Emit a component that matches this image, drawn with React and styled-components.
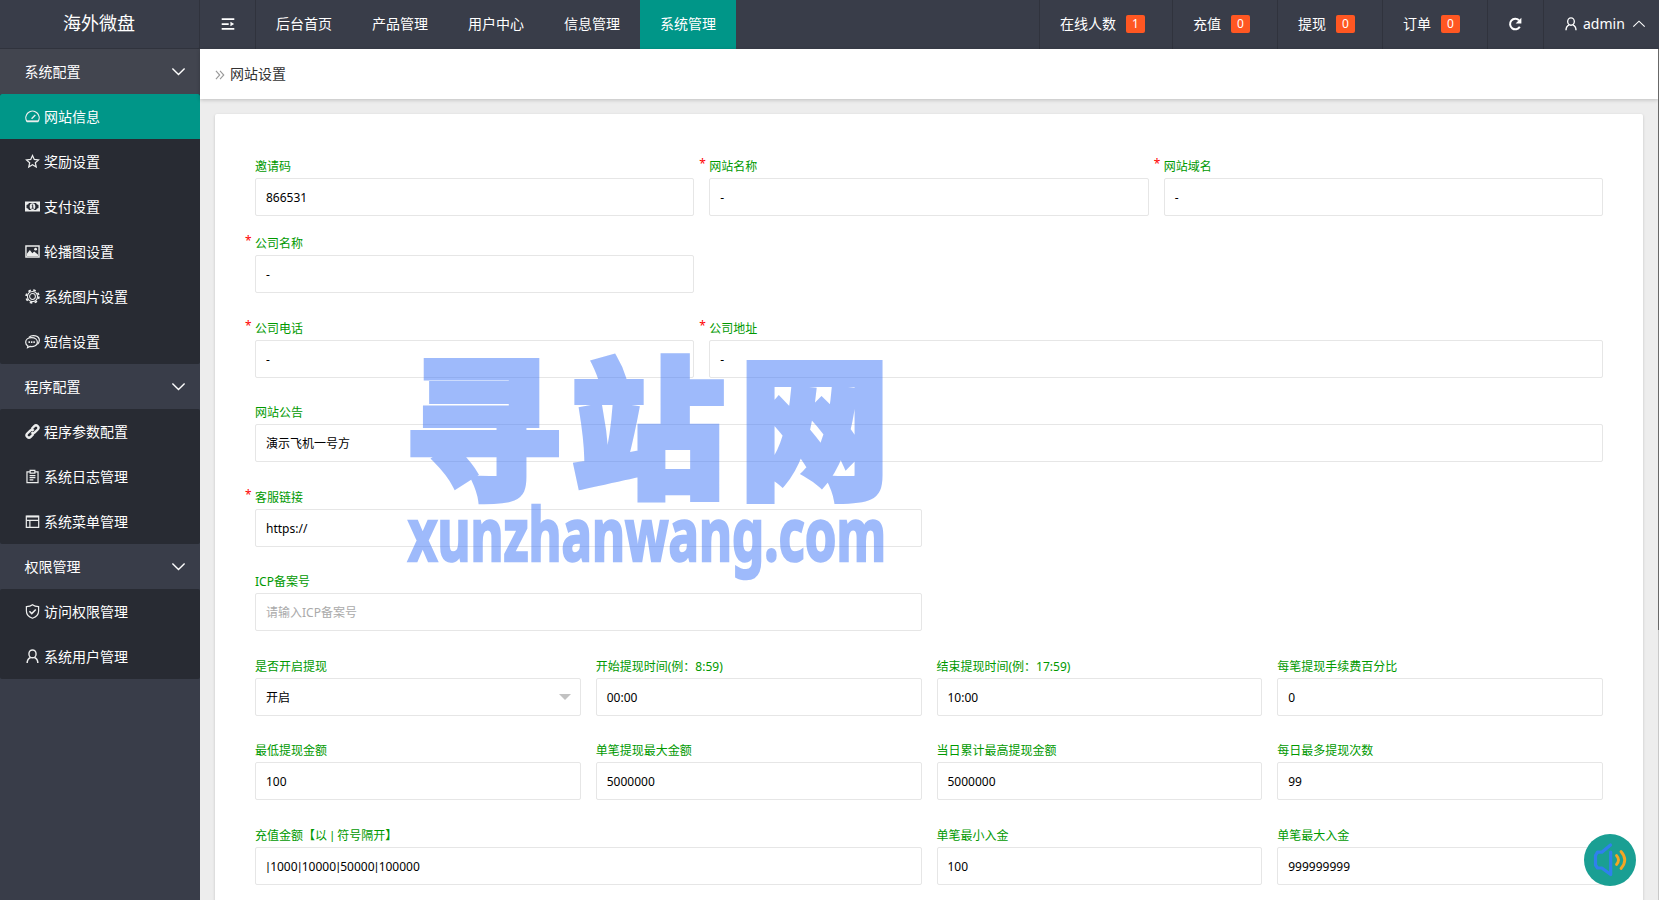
import React from "react";
import styled, { createGlobalStyle, css } from "styled-components";

const GlobalStyle = createGlobalStyle`
  * {
    box-sizing: border-box;
  }

  body {
    margin: 0;
    overflow: hidden;
    background: #ededed;
    font-family: "Noto Sans", "Noto Sans CJK SC", sans-serif;
    font-size: 14px;
  }
`;

const icons = {
  dashboard: (
    <>
      <path d="M2.1 13.300A7.100 7.100 0 1 1 13.900 13.300Z" />
      <path d="M7 10.400 11 6.400" strokeWidth="1.600" />
      <path d="M1.900 13.200h12.200" strokeWidth="2" />
    </>
  ),
  star: <path d="M8 1.600 9.900 5.800l4.500.5-3.400 3 1 4.600L8 11.500l-4 2.400 1-4.600-3.400-3 4.500-.5Z" />,
  money: (
    <>
      <path d="M0 2.700h16v10.600H0Z" fill="currentColor" stroke="none" />
      <path d="M4.200 4.200h7.600Q12 6 14.400 6.300v3.400Q12 10 11.800 11.800H4.200Q4 10 1.600 9.700V6.300Q4 6 4.200 4.200Z" fill="#282b33" stroke="none" />
      <ellipse cx="8" cy="8" rx="3" ry="3.600" fill="currentColor" stroke="none" />
      <path d="M7.200 6.900 8.200 6.200v3.600M7 9.900h2.300" stroke="#282b33" strokeWidth="1" />
    </>
  ),
  picture: (
    <>
      <path d="M1 2.200h14v11.600H1Z" strokeWidth="1.500" />
      <path d="M2 12.800V10.500l3.200-4 2.600 3.300 2-1.700 4.200 3.400v1.300Z" fill="currentColor" stroke="none" />
      <circle cx="11.300" cy="5.500" r="1.500" fill="currentColor" stroke="none" />
    </>
  ),
  gear: (
    <>
      <circle cx="8" cy="8" r="6.800" strokeWidth="1.800" strokeDasharray="2.700 2.640" />
      <circle cx="8" cy="8" r="5.400" strokeWidth="1.200" />
      <circle cx="8" cy="8" r="3.100" strokeWidth="1.100" />
    </>
  ),
  chat: (
    <>
      <path d="M4.300 3.400C8 0 15.600 2 15.300 7c-.1 1.900-.8 3-2 4" />
      <path d="M7 3.900C3.200 3.900.7 6 .7 8.700c0 1.700.9 3.100 2.400 4L2.700 14.500l2.600-1.200c4.300.8 7.900-1.300 7.900-4.600C13.200 6 10.700 3.900 7 3.900Z" />
      <path d="M3.700 8.700h1.600M6.300 8.700h1.600M8.900 8.700h1.600" strokeWidth="1.800" />
    </>
  ),
  link: (
    <g strokeWidth="2.500">
      <path d="M6.900 5.300 9.900 2.300a2.500 2.500 0 0 1 3.700 3.600l-3.200 3.100a2.500 2.500 0 0 1-3.600-.2" />
      <path d="m9.100 10.700-3 3a2.500 2.500 0 0 1-3.700-3.600l3.200-3.100a2.500 2.500 0 0 1 3.600.2" />
    </g>
  ),
  log: (
    <>
      <path d="M5.300 3H2.100v11.500h11.800V3h-3.200" />
      <path d="M5.500 1.400h5v3.100h-5Z" />
      <path d="M4.900 7h6.200M4.900 9.300h6.200M4.900 11.600h4" />
    </>
  ),
  menu: (
    <>
      <path d="M1.400 2.300h13.200v12H1.400Z" />
      <path d="M1.400 2.800h13.200" strokeWidth="1.700" />
      <path d="M1.400 6.800h13.200M5.200 6.800v7.200" />
    </>
  ),
  shield: (
    <>
      <path d="M8 .9C6.300 2.300 3.800 2.900 1.500 2.900v4.600C1.500 11.100 4.300 13.900 8 15.200c3.700-1.300 6.500-4.100 6.500-7.700V2.900C12.200 2.900 9.700 2.300 8 .9Z" />
      <path d="m4.700 7.700 2.500 2.500 4.300-4.400" strokeWidth="1.700" />
    </>
  ),
  user: (
    <>
      <ellipse cx="8" cy="5.200" rx="3.800" ry="4.200" strokeWidth="1.500" />
      <path d="M5.900 9C3.500 10 2.300 11.900 2.300 15M10.100 9c2.400 1 3.600 2.900 3.600 6" strokeWidth="1.600" />
    </>
  ),
  shrink: (
    <>
      <path d="M.8 2.400h14.400M.8 8h8M.8 13.600h14.400" strokeWidth="2" />
      <path d="M10.800 5.300v5.400L15 8Z" fill="currentColor" stroke="none" />
    </>
  ),
  refresh: (
    <>
      <path d="M13.500 11.200A6 6 0 1 1 12.600 3.800" strokeWidth="2.300" />
      <path d="M15.300.8v6.600H8.700Z" fill="currentColor" stroke="none" />
    </>
  ),
  down: <path d="m1.500 4.800 6.500 6.300 6.500-6.300" strokeWidth="1.500" />,
  up: <path d="M1.500 11.100 8 4.800l6.500 6.300" strokeWidth="1.300" />,
  crumb: <path d="m1.500 1.500 6 6.500-6 6.500M8 1.500l6 6.500L8 14.500" strokeWidth="1.800" />,
};

const Icon = ({ name, size = 16 }) => (
  <IconSvg viewBox="0 0 16 16" $size={size}>
    {icons[name]}
  </IconSvg>
);

const navItems = ["后台首页", "产品管理", "用户中心", "信息管理", "系统管理"];

const counters = [
  { label: "在线人数", count: 1 },
  { label: "充值", count: 0 },
  { label: "提现", count: 0 },
  { label: "订单", count: 0 },
];

const menu = [
  {
    label: "系统配置",
    hover: true,
    items: [
      { label: "网站信息", icon: "dashboard", active: true },
      { label: "奖励设置", icon: "star" },
      { label: "支付设置", icon: "money" },
      { label: "轮播图设置", icon: "picture" },
      { label: "系统图片设置", icon: "gear" },
      { label: "短信设置", icon: "chat" },
    ],
  },
  {
    label: "程序配置",
    items: [
      { label: "程序参数配置", icon: "link" },
      { label: "系统日志管理", icon: "log" },
      { label: "系统菜单管理", icon: "menu" },
    ],
  },
  {
    label: "权限管理",
    items: [
      { label: "访问权限管理", icon: "shield" },
      { label: "系统用户管理", icon: "user" },
    ],
  },
];

const rows = [
  {
    height: 77,
    fields: [
      { label: "邀请码", value: "866531", span: 4 },
      { label: "网站名称", value: "-", span: 4, required: true },
      { label: "网站域名", value: "-", span: 4, required: true },
    ],
  },
  { height: 85, fields: [{ label: "公司名称", value: "-", span: 4, required: true }] },
  {
    height: 84,
    fields: [
      { label: "公司电话", value: "-", span: 4, required: true },
      { label: "公司地址", value: "-", span: 8, required: true },
    ],
  },
  { height: 85, fields: [{ label: "网站公告", value: "演示飞机一号方", span: 12 }] },
  { height: 84, fields: [{ label: "客服链接", value: "https://", span: 6, required: true }] },
  { height: 85, fields: [{ label: "ICP备案号", placeholder: "请输入ICP备案号", span: 6 }] },
  {
    height: 84,
    fields: [
      { label: "是否开启提现", value: "开启", span: 3, select: true },
      { label: "开始提现时间(例：8:59)", value: "00:00", span: 3 },
      { label: "结束提现时间(例：17:59)", value: "10:00", span: 3 },
      { label: "每笔提现手续费百分比", value: "0", span: 3 },
    ],
  },
  {
    height: 85,
    fields: [
      { label: "最低提现金额", value: "100", span: 3 },
      { label: "单笔提现最大金额", value: "5000000", span: 3 },
      { label: "当日累计最高提现金额", value: "5000000", span: 3 },
      { label: "每日最多提现次数", value: "99", span: 3 },
    ],
  },
  {
    height: 85,
    fields: [
      { label: "充值金额【以 | 符号隔开】", value: "|1000|10000|50000|100000", span: 6 },
      { label: "单笔最小入金", value: "100", span: 3 },
      { label: "单笔最大入金", value: "999999999", span: 3 },
    ],
  },
];

// The separator is set in a face with a narrow bar
const withPipes = (text) =>
  text.split("|").map((part, i) => (
    <React.Fragment key={i}>
      {i > 0 && <Pipe>|</Pipe>}
      {part}
    </React.Fragment>
  ));

const Field = ({ label, value, placeholder, span, required, select }) => (
  <FieldWrap $span={span}>
    <Label>
      {required && <Star>*</Star>}
      {withPipes(label)}
    </Label>
    <InputBox $empty={!value}>
      {withPipes(value || placeholder)}
      {select && <Caret />}
    </InputBox>
  </FieldWrap>
);

const App = () => {
  return (
    <Page>
      <GlobalStyle />
      <Header>
        <Logo>海外微盘</Logo>
        <Toggle>
          <Icon name="shrink" size={14} />
        </Toggle>
        {navItems.map((item) => (
          <NavItem key={item} $active={item === "系统管理"}>
            {item}
          </NavItem>
        ))}
        <Spacer />
        {counters.map(({ label, count }) => (
          <Counter key={label}>
            {label}
            <Badge>{count}</Badge>
          </Counter>
        ))}
        <Refresh>
          <Icon name="refresh" size={14} />
        </Refresh>
        <Account>
          <Icon name="user" size={14} />
          admin
          <Icon name="up" size={14} />
        </Account>
      </Header>
      <Body>
        <Sidebar>
          {menu.map((group) => (
            <React.Fragment key={group.label}>
              <GroupTitle $hover={group.hover}>
                {group.label}
                <Icon name="down" size={15} />
              </GroupTitle>
              <GroupList>
                {group.items.map((item) => (
                  <MenuItem key={item.label} $active={item.active}>
                    <Icon name={item.icon} size={15} />
                    {item.label}
                  </MenuItem>
                ))}
              </GroupList>
            </React.Fragment>
          ))}
        </Sidebar>
        <Main>
          <Crumb>
            <Icon name="crumb" size={10} />
            网站设置
          </Crumb>
          <Card>
            {rows.map((row, i) => (
              <Row key={i} $height={row.height}>
                {row.fields.map((field) => (
                  <Field key={field.label} {...field} />
                ))}
              </Row>
            ))}
          </Card>
        </Main>
        <ScrollTrack>
          <ScrollThumb />
        </ScrollTrack>
      </Body>
      <Watermark viewBox="0 0 480 230">
        <text x="-4" y="134" fontSize="154" textLength="159" lengthAdjust="spacingAndGlyphs">寻</text>
        <text x="164" y="132" fontSize="150" textLength="154" lengthAdjust="spacingAndGlyphs">站</text>
        <text x="332" y="134" fontSize="154" textLength="151" lengthAdjust="spacingAndGlyphs">网</text>
        <text className="domain" x="1" y="208" fontSize="74" textLength="478" lengthAdjust="spacingAndGlyphs">
          xunzhanwang.com
        </text>
      </Watermark>
      <SoundButton>
        <svg viewBox="0 0 52 52" width="52" height="52" fill="none" strokeLinecap="round">
          <path d="M26.500 11 17.800 18.200H13.500L11.500 21.500V31l2 3H17.800L26.700 40.500V18" stroke="#2f80ed" strokeWidth="3.200" strokeLinejoin="round" />
          <path d="M32.500 21.500q4 4.500 0 9M37 17.500q7.500 8.500 0 17" stroke="#f5a623" strokeWidth="2.800" />
        </svg>
      </SoundButton>
    </Page>
  );
};

const IconSvg = styled.svg`
  width: ${({ $size }) => $size}px;
  height: ${({ $size }) => $size}px;
  flex: none;
  fill: none;
  stroke: currentColor;
  stroke-width: 1.3;
`;

const Page = styled.div`
  display: flex;
  flex-direction: column;
  width: 1659px;
  height: 900px;
  overflow: hidden;
`;

const Header = styled.header`
  display: flex;
  flex: none;
  height: 49px;
  background: #393d49;
  color: #fff;
  line-height: 46px;
`;

const Logo = styled.div`
  width: 200px;
  padding-right: 1px;
  border-right: 1px solid #30333d;
  border-bottom: 1px solid #30333d;
  font-size: 18px;
  text-align: center;
`;

const Toggle = styled.div`
  display: flex;
  align-items: center;
  justify-content: center;
  width: 56px;
  padding-bottom: 1px;
  border-right: 1px solid #30333d;
`;

const NavItem = styled.div`
  padding: 0 20px;
  line-height: 48px;
  ${({ $active }) => $active && css`
    background: #009688;
  `}
`;

const Spacer = styled.div`
  flex: 1;
`;

const Counter = styled.div`
  display: flex;
  align-items: center;
  padding: 0 27px 2px 20px;
  border-left: 1px solid #30333d;
`;

const Badge = styled.span`
  width: 19px;
  height: 18px;
  margin-left: 10px;
  border-radius: 2px;
  background: #ff5722;
  font-size: 12px;
  line-height: 18px;
  text-align: center;
`;

const Refresh = styled.div`
  display: flex;
  align-items: center;
  justify-content: center;
  width: 56px;
  padding: 0 1px 1px 0;
  border-left: 1px solid #30333d;
`;

const Account = styled.div`
  display: flex;
  align-items: center;
  gap: 5px;
  width: 116px;
  padding: 0 0 2px 20px;
  border-left: 1px solid #30333d;

  svg:last-child {
    margin-left: 2px;
  }
`;

const Body = styled.div`
  display: flex;
  flex: 1;
  min-height: 0;
`;

const Sidebar = styled.aside`
  flex: none;
  width: 200px;
  background: #393d49;
  color: #fff;
  line-height: 45px;
`;

const GroupTitle = styled.div`
  display: flex;
  align-items: center;
  justify-content: space-between;
  height: 45px;
  padding: 0 14px 0 24.5px;
  background: ${({ $hover }) => ($hover ? "#42454f" : "#393d49")};
`;

const GroupList = styled.div`
  overflow: hidden;
  border-radius: 2px;
  background: #282b33;
`;

const MenuItem = styled.div`
  display: flex;
  align-items: center;
  gap: 4.5px;
  height: 45px;
  padding-left: 24.5px;
  background: ${({ $active }) => ($active ? "#009688" : "transparent")};

  svg {
    color: #eceded;
  }
`;

const Main = styled.main`
  flex: 1;
`;

const Crumb = styled.div`
  display: flex;
  align-items: center;
  gap: 5px;
  height: 50px;
  padding: 0 0 2px 15px;
  background: #fff;
  box-shadow: 0 1px 4px rgba(0, 0, 0, 0.2);
  color: #333;

  svg {
    margin-top: 3px;
    color: #999;
  }
`;

const Card = styled.div`
  height: 860px;
  margin: 15px 15px 0;
  padding: 40px 40px 0;
  border-radius: 2px;
  background: #fff;
  box-shadow: 0 1px 3px rgba(0, 0, 0, 0.18);
`;

const Row = styled.div`
  display: grid;
  grid-template-columns: repeat(12, minmax(0, 1fr));
  column-gap: 15px;
  height: ${({ $height }) => $height}px;
`;

const FieldWrap = styled.div`
  grid-column: span ${({ $span }) => $span};
`;

const Label = styled.div`
  position: relative;
  height: 24px;
  color: #090;
  font-size: 12px;
  line-height: 25px;
  white-space: pre;
`;

const Star = styled.span`
  position: absolute;
  left: -10px;
  top: -3px;
  color: #f00;
`;

const Pipe = styled.span`
  margin: 0 0.6px;
  font-family: Roboto, sans-serif;
`;

const InputBox = styled.div`
  position: relative;
  height: 38px;
  padding: 0 10px;
  border: 1px solid #e6e6e6;
  border-radius: 2px;
  background: #fff;
  color: ${({ $empty }) => ($empty ? "#aaa" : "#000")};
  font-size: 12px;
  line-height: 38px;
`;

const Caret = styled.i`
  position: absolute;
  top: 15px;
  right: 9px;
  border: 6px solid transparent;
  border-top-color: #c2c2c2;
  border-bottom: none;
`;

const ScrollTrack = styled.div`
  flex: none;
  width: 1px;
  background: #c8c8c8;
`;

const ScrollThumb = styled.div`
  height: 581px;
  background: #686868;
`;

const Watermark = styled.svg`
  position: absolute;
  left: 407px;
  top: 353px;
  width: 480px;
  height: 230px;
  overflow: visible;
  opacity: 0.5;
  fill: #4078f8;
  stroke: #4078f8;
  stroke-width: 6;
  font-family: "Noto Sans CJK SC", sans-serif;
  font-weight: 900;
  pointer-events: none;

  .domain {
    stroke-width: 2.5;
    font-family: "Noto Sans", sans-serif;
    font-weight: 700;
  }
`;

const SoundButton = styled.div`
  position: absolute;
  left: 1584px;
  top: 834px;
  width: 52px;
  height: 52px;
  border-radius: 50%;
  background: #1a9f93;
`;

export default App;
